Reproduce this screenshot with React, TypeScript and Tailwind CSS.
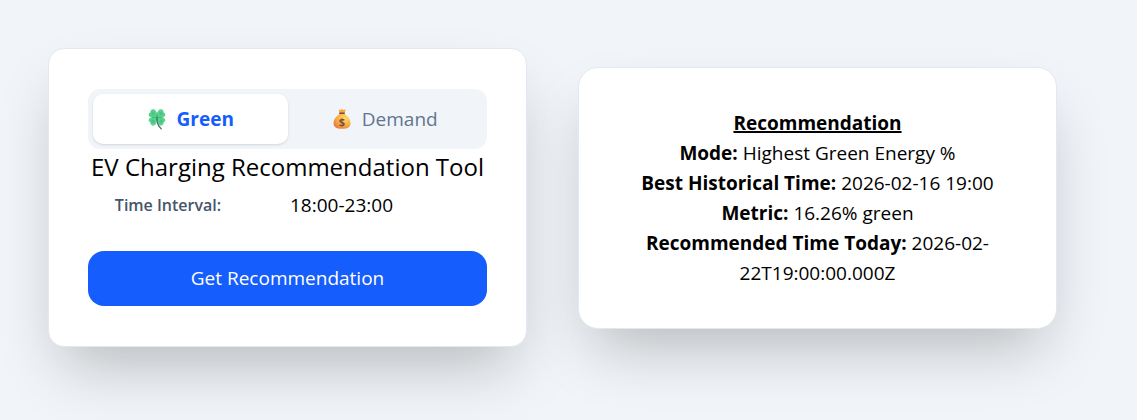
import React, { useState } from 'react';

type Mode = 'green' | 'demand';

const CloverIcon: React.FC = () => (
  <svg width="20" height="22" viewBox="0 0 20 22" aria-hidden="true" className="shrink-0">
    <defs>
      <radialGradient id="leaf" cx="50%" cy="50%" r="65%">
        <stop offset="0%" stopColor="#45bf7c" />
        <stop offset="60%" stopColor="#5bd892" />
        <stop offset="100%" stopColor="#3fb57b" />
      </radialGradient>
    </defs>
    <g fill="url(#leaf)">
      <path d="M10.200 9.800C8.600 9.900 4.200 10.200 2.500 8.400 1 6.900 1.600 4.900 3.400 4.500 3 2.500 4.600.8 6.700 1.200 9.200 1.700 10.200 5 10.200 9.800z" />
      <path d="M9.800 9.800c1.600.1 6 .4 7.700-1.400 1.500-1.500.9-3.500-.9-3.900.4-2-1.200-3.700-3.300-3.300C10.800 1.700 9.800 5 9.800 9.800z" />
      <path d="M10.200 9c-1.600-.1-6-.4-7.700 1.400-1.500 1.500-.9 3.500.9 3.900-.4 2 1.200 3.700 3.300 3.300 2.500-.5 3.500-3.800 3.500-8.600z" />
      <path d="M9.800 9c1.600-.1 6-.4 7.700 1.400 1.500 1.500.9 3.500-.9 3.900.4 2-1.200 3.700-3.300 3.300-2.500-.5-3.500-3.800-3.500-8.600z" />
    </g>
    <path d="M10 4v8M5 9.400h10" stroke="#2c9a60" strokeWidth=".8" opacity=".6" />
    <path d="M10 10.500c0 3.800.8 7.500 4.200 10.300" fill="none" stroke="#4a6a66" strokeWidth="1.200" strokeLinecap="round" />
  </svg>
);

const MoneyBagIcon: React.FC = () => (
  <svg width="20" height="22" viewBox="0 0 20 22" aria-hidden="true" className="shrink-0">
    <defs>
      <radialGradient id="bag" cx="68%" cy="30%" r="80%">
        <stop offset="0%" stopColor="#ffdc5c" />
        <stop offset="55%" stopColor="#fab043" />
        <stop offset="100%" stopColor="#e27a42" />
      </radialGradient>
    </defs>
    <path d="M7.500 6h5c3.600 2.300 6 5.600 6 8.900 0 4.200-3.200 5.900-8.500 5.900s-8.500-1.700-8.500-5.900C1.500 11.600 3.900 8.300 7.500 6z" fill="url(#bag)" />
    <path d="M7.600 5l-.8-2.600c-.2-.7.4-1 1-.7l1.100.4.700-.9c.3-.3.700-.3 1 0l.7.9 1.100-.4c.7-.3 1.300.1 1 .8L12.600 5z" fill="#f9a938" />
    <rect x="7" y="4.400" width="6" height="1.600" rx=".8" fill="#7a4844" />
    <text x="10" y="17.500" textAnchor="middle" fontSize="11" fontWeight="700" fill="#80484a" fontFamily="Open Sans, sans-serif">
      $
    </text>
  </svg>
);

interface ModeButtonProps {
  active: boolean;
  onClick: () => void;
  icon: React.ReactNode;
  label: string;
}

const ModeButton: React.FC<ModeButtonProps> = ({ active, onClick, icon, label }) => (
  <button
    type="button"
    aria-pressed={active}
    onClick={onClick}
    className={
      'flex h-[50px] flex-1 items-center justify-center gap-[10px] rounded-[10px] text-[19px] ' +
      (active ? 'bg-white font-bold text-blue-600 shadow-sm' : 'text-slate-500')
    }
  >
    {icon}
    <span>{label}</span>
  </button>
);

const results = [
  { label: 'Mode:', value: 'Highest Green Energy %' },
  { label: 'Best Historical Time:', value: '2026-02-16 19:00' },
  { label: 'Metric:', value: '16.26% green' },
  { label: 'Recommended Time Today:', value: '2026-02-22T19:00:00.000Z' },
];

const App: React.FC = () => {
  const [mode, setMode] = useState<Mode>('green');

  return (
    <main className="grid min-h-screen grid-cols-2 items-center gap-[51px] bg-slate-100 pt-12 pr-20 pb-[74px] pl-12 font-['Open_Sans',sans-serif] text-black">
      <section className="rounded-2xl border border-slate-200 bg-white px-[39px] py-10 shadow-[0_31px_62px_-15px_rgba(0,0,0,0.25)]">
        <div className="flex rounded-xl bg-slate-100 p-[5px]">
          <ModeButton active={mode === 'green'} onClick={() => setMode('green')} icon={<CloverIcon />} label="Green" />
          <ModeButton active={mode === 'demand'} onClick={() => setMode('demand')} icon={<MoneyBagIcon />} label="Demand" />
        </div>
        <h1 className="text-center text-2xl leading-9 whitespace-nowrap">EV Charging Recommendation Tool</h1>
        <div className="mt-1 mb-[30px] grid grid-cols-[160px_1fr] items-center gap-[42px]">
          <label htmlFor="interval" className="text-center text-base leading-8 font-semibold text-slate-600">
            Time Interval:
          </label>
          <select id="interval" className="appearance-none text-[19px] leading-8">
            <option>18:00-23:00</option>
          </select>
        </div>
        <button type="button" className="h-[55px] w-full rounded-2xl bg-blue-600 text-[19px] text-white">
          Get Recommendation
        </button>
      </section>

      <section className="rounded-[20px] border border-slate-200 bg-white px-[50px] py-10 text-center text-[19px] leading-[30px] shadow-[0_31px_62px_-15px_rgba(0,0,0,0.25)]">
        <h2 className="font-bold underline decoration-2">Recommendation</h2>
        {results.map((row) => (
          <p key={row.label}>
            <strong>{row.label}</strong> {row.value}
          </p>
        ))}
      </section>
    </main>
  );
};

export default App;
